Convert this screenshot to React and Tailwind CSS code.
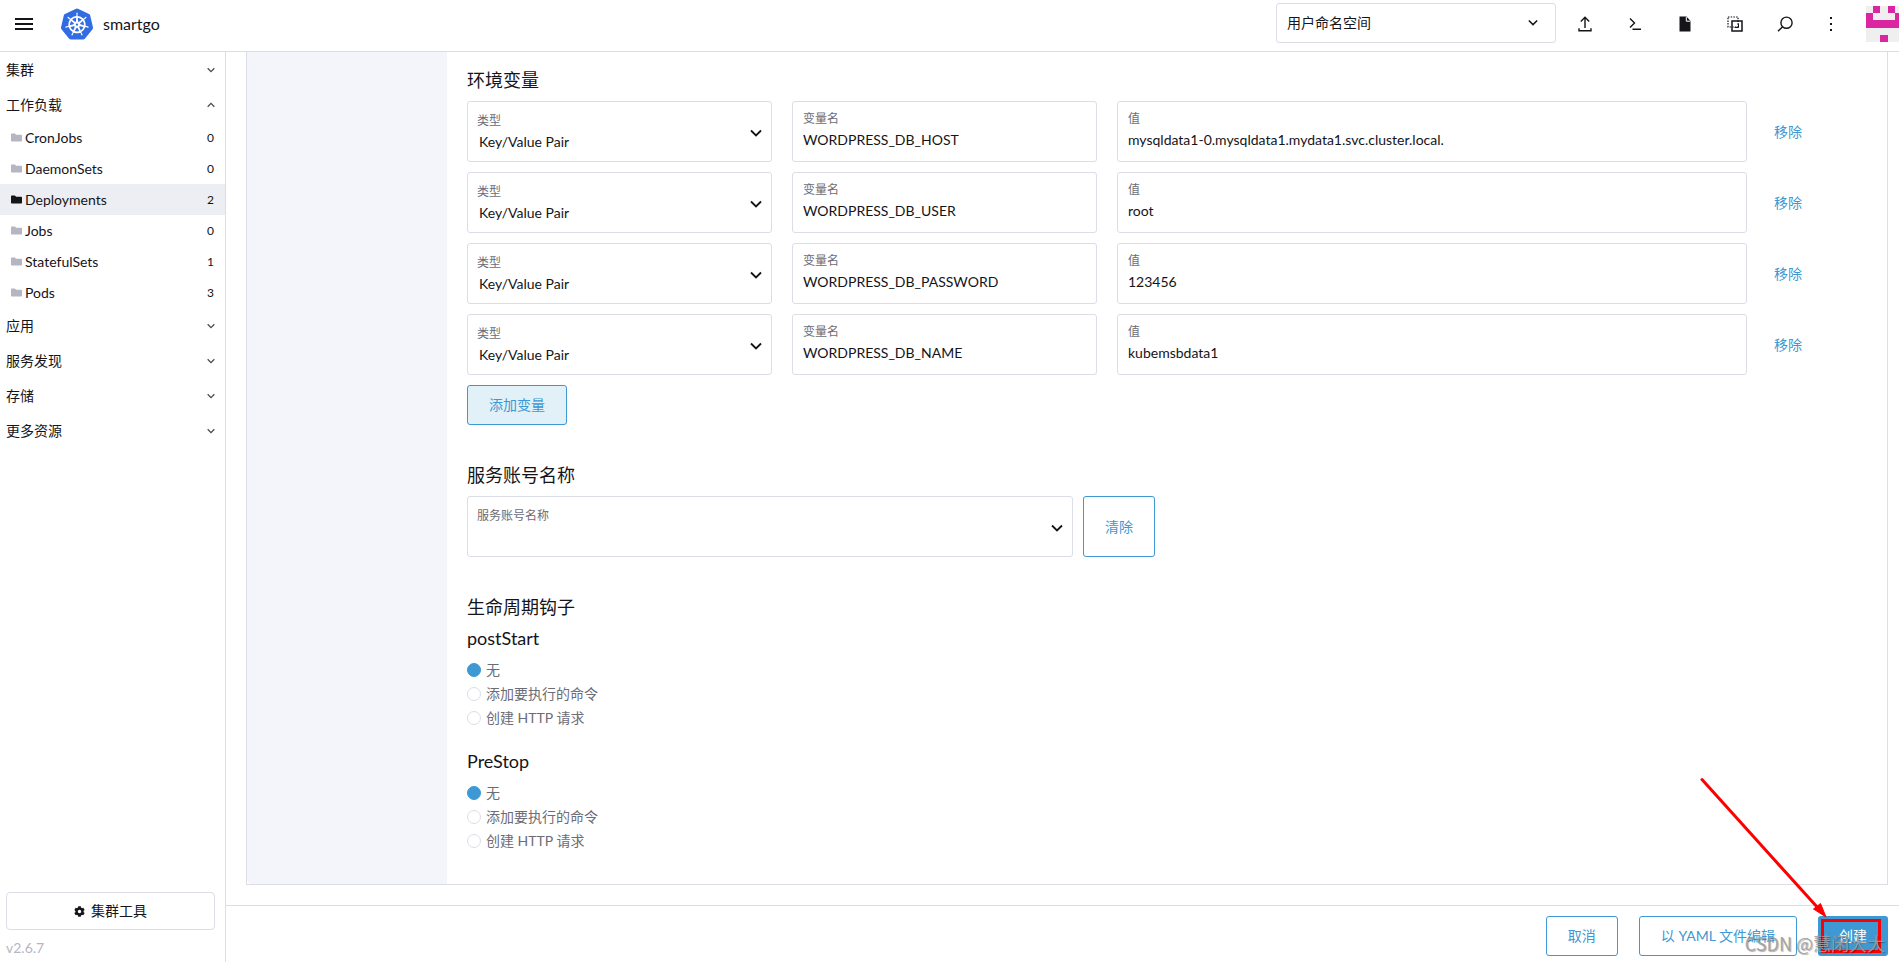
import { useState } from "react";
import { FaCog } from "react-icons/fa";
import { SiKubernetes } from "react-icons/si";

const workloads = [
  { name: "CronJobs", count: 0 },
  { name: "DaemonSets", count: 0 },
  { name: "Deployments", count: 2 },
  { name: "Jobs", count: 0 },
  { name: "StatefulSets", count: 1 },
  { name: "Pods", count: 3 },
];

const groupsBelow = ["应用", "服务发现", "存储", "更多资源"];

const initialVars = [
  { id: 1, name: "WORDPRESS_DB_HOST", value: "mysqldata1-0.mysqldata1.mydata1.svc.cluster.local." },
  { id: 2, name: "WORDPRESS_DB_USER", value: "root" },
  { id: 3, name: "WORDPRESS_DB_PASSWORD", value: "123456" },
  { id: 4, name: "WORDPRESS_DB_NAME", value: "kubemsbdata1" },
];

const hookOptions = ["无", "添加要执行的命令", "创建 HTTP 请求"];

function Chevron({ className, up, strokeWidth = 1.5 }) {
  return (
    <svg viewBox="0 0 12 8" fill="none" stroke="currentColor" strokeWidth={strokeWidth} className={className} aria-hidden="true">
      <path d={up ? "M1 6.5 6 1.5l5 5" : "M1 1.5l5 5 5-5"} />
    </svg>
  );
}

function FolderIcon({ className }) {
  return (
    <svg viewBox="0 0 11 9" fill="currentColor" className={className} aria-hidden="true">
      <path d="M0 1.2Q0 .4.8.4h3l1.400 1.400h5q.8 0 .8.8v5.200q0 .8-.8.8H.8Q0 8.600 0 7.800z" />
    </svg>
  );
}

function Avatar() {
  return (
    <div className="ml-[14px] h-9 w-[33px] shrink-0 overflow-hidden">
      <svg viewBox="0 0 5 5" className="h-9 w-9 max-w-none" shapeRendering="crispEdges" aria-hidden="true">
        <rect width="5" height="5" fill="#efefef" />
        <path d="M1 0h1v1H1zM3 0h1v1H3zM0 1h1v1h3V1h1v2H0zM2 4h1v1H2z" fill="#dc26a1" />
      </svg>
    </div>
  );
}

function HeaderButton({ label, children }) {
  return (
    <button aria-label={label} className="flex h-10 w-[50px] shrink-0 items-center justify-center">
      <svg viewBox="0 0 16 16" fill="none" stroke="currentColor" strokeWidth="1.4" className="h-4 w-4" aria-hidden="true">
        {children}
      </svg>
    </button>
  );
}

function Header() {
  return (
    <header className="flex h-[52px] shrink-0 items-center overflow-hidden border-b border-[#dcdee7] pb-[3px]">
      <button aria-label="菜单" className="ml-[15px] flex w-[18px] shrink-0 flex-col gap-[3px]">
        <span className="h-0.5 bg-[#141419]" />
        <span className="h-0.5 bg-[#141419]" />
        <span className="h-0.5 bg-[#141419]" />
      </button>
      <SiKubernetes className="ml-7 h-8 w-8 shrink-0 text-[#326ce5]" />
      <span className="ml-[10px] text-base">smartgo</span>

      <div className="relative mr-1 mb-[2px] ml-auto w-[280px]">
        <select aria-label="命名空间" className="h-10 w-full appearance-none rounded-[3px] border border-[#dcdee7] bg-white px-[10px] text-sm">
          <option>用户命名空间</option>
        </select>
        <Chevron className="pointer-events-none absolute top-4 right-[18px] h-[7px] w-[10px]" strokeWidth={1.8} />
      </div>
      <HeaderButton label="导入 YAML">
        <path d="M8 12V1.500M3.800 5.500 8 1.300l4.200 4.200M2 12.300v2.400h12v-2.400" />
      </HeaderButton>
      <HeaderButton label="Kubectl Shell">
        <path d="M3 2.500 7.500 7 3 11.500M5.500 13.300H14" />
      </HeaderButton>
      <HeaderButton label="下载 KubeConfig">
        <path d="M2.500.5h7L13.500 5v10.500h-11z" fill="currentColor" stroke="none" />
        <path d="M9.300 1v4.200h4" stroke="#fff" strokeWidth="1" />
      </HeaderButton>
      <HeaderButton label="复制 KubeConfig">
        <path d="M1 1h10v10H1z" strokeDasharray="1.500 1.200" strokeWidth="1.200" />
        <path d="M5 5h10v10H5z" strokeWidth="1.500" />
        <path d="M7.500 11.500h4v-4" strokeWidth="1" />
      </HeaderButton>
      <HeaderButton label="搜索">
        <circle cx="9.500" cy="6.700" r="5.600" />
        <path d="M5.600 10.700 1 15.300" />
      </HeaderButton>
      <button aria-label="更多" className="flex h-10 w-[42px] shrink-0 flex-col items-center justify-center gap-1">
        <span className="h-0.5 w-0.5 bg-[#141419]" />
        <span className="h-0.5 w-0.5 bg-[#141419]" />
        <span className="h-0.5 w-0.5 bg-[#141419]" />
      </button>
      <Avatar />
    </header>
  );
}

function NavGroup({ name, open }) {
  return (
    <button className="flex h-[35px] w-full items-center justify-between pr-[10px] pl-[6px] text-sm">
      {name}
      <Chevron up={open} className="h-[6px] w-[8px] text-[#4c4c56]" strokeWidth={2} />
    </button>
  );
}

function Sidebar() {
  return (
    <nav className="flex w-[226px] shrink-0 flex-col border-r border-[#dcdee7]">
      <NavGroup name="集群" />
      <NavGroup name="工作负载" open />
      <ul>
        {workloads.map((item) => {
          const active = item.name === "Deployments";
          return (
            <li key={item.name}>
              <a href="#" className={`flex h-[31px] items-center pr-[11px] pl-[11px] text-sm ${active ? "bg-[#edeef3]" : ""}`}>
                <FolderIcon className={`mr-[3px] h-[9px] w-[11px] ${active ? "text-[#141419]" : "text-[#b6b6c2]"}`} />
                {item.name}
                <span className="ml-auto text-xs">{item.count}</span>
              </a>
            </li>
          );
        })}
      </ul>
      {groupsBelow.map((name) => (
        <NavGroup key={name} name={name} />
      ))}

      <div className="mt-auto pr-[10px] pb-1 pl-[6px]">
        <button className="mb-2 flex h-[38px] w-full items-center justify-center gap-[6px] rounded-[4px] border border-[#dcdee7] text-sm">
          <FaCog className="h-[11px] w-[11px]" />
          集群工具
        </button>
        <p className="text-sm text-[#b6b6c2]">v2.6.7</p>
      </div>
    </nav>
  );
}

function SelectField({ id, label, options }) {
  return (
    <div className="relative h-[61px] rounded-[3px] border border-[#dcdee7]">
      <label htmlFor={id} className="absolute top-[11px] left-[9px] text-xs text-[#6c6c76]">
        {label}
      </label>
      <select id={id} className="h-full w-full appearance-none bg-transparent pt-[22px] pr-8 pb-[2px] pl-[11px] text-sm">
        {options.map((option) => (
          <option key={option}>{option}</option>
        ))}
      </select>
      <Chevron className="pointer-events-none absolute top-[27px] right-[9px] h-[8px] w-[12px]" strokeWidth={1.8} />
    </div>
  );
}

function TextField({ id, label, value }) {
  return (
    <div className="flex h-[61px] flex-col rounded-[3px] border border-[#dcdee7] px-[10px] pt-[9px]">
      <label htmlFor={id} className="text-xs text-[#6c6c76]">
        {label}
      </label>
      <input id={id} type="text" defaultValue={value} className="mt-[3px] h-5 w-full text-sm outline-none" />
    </div>
  );
}

function Hook({ name, title }) {
  return (
    <fieldset>
      <legend className="mb-2 text-lg leading-6">{title}</legend>
      {hookOptions.map((option, i) => (
        <label key={option} className="flex h-6 items-center gap-[5px] text-sm text-[#6c6c76]">
          <input
            type="radio"
            name={name}
            defaultChecked={i === 0}
            className="h-[14px] w-[14px] appearance-none rounded-full border border-[#dcdee7] checked:border-[#3d98d3] checked:bg-[#3d98d3]"
          />
          {option}
        </label>
      ))}
    </fieldset>
  );
}

function Heading({ children }) {
  return <h3 className="mb-[9px] text-lg leading-6">{children}</h3>;
}

// red arrow and frame pointing at the create button
function Callout() {
  return (
    <svg viewBox="0 0 190 180" className="pointer-events-none absolute right-0 bottom-0 h-[180px] w-[190px] max-w-none" aria-hidden="true">
      <path d="M4 3.500 120 132" stroke="#fe0000" strokeWidth="3" strokeLinecap="round" />
      <path d="M128 141 115.500 133l7-5.500z" fill="#fe0000" stroke="#fe0000" />
      <rect x="124.500" y="144.500" width="57" height="31" fill="none" stroke="#fe0000" strokeWidth="3" />
    </svg>
  );
}

function Footer() {
  return (
    <footer className="relative flex h-[57px] shrink-0 items-center justify-end gap-[21px] border-t border-[#dcdee7] pt-[3px] pr-[11px] text-sm">
      <button className="h-10 rounded-[3px] border border-[#3d98d3] px-[21px] text-[#3d98d3]">取消</button>
      <button className="h-10 rounded-[3px] border border-[#3d98d3] px-[21px] text-[#3d98d3]">以 YAML 文件编辑</button>
      <div className="relative">
        <button className="h-10 rounded-[3px] bg-[#3d98d3] px-[21px] text-white">创建</button>
        <Callout />
      </div>
      <span className="pointer-events-none absolute right-[14px] bottom-[5px] font-['Noto_Sans_CJK_SC',sans-serif] text-lg text-[#a0a0a0]/90 [text-shadow:1px_1px_1px_#00000050]">
        CSDN @慧闲大大
      </span>
    </footer>
  );
}

export default function App() {
  const [vars, setVars] = useState(initialVars);

  const addVar = () => setVars([...vars, { id: Date.now(), name: "", value: "" }]);
  const removeVar = (id) => setVars(vars.filter((v) => v.id !== id));

  return (
    <div className="flex h-screen flex-col overflow-hidden bg-white font-['Lato','Noto_Sans_CJK_SC',sans-serif] text-[#141419]">
      <Header />
      <div className="flex min-h-0 flex-1">
        <Sidebar />
        <div className="flex min-w-0 flex-1 flex-col">
          <main className="mr-[11px] mb-5 ml-5 flex min-h-0 flex-1 border-x border-b border-[#dcdee7]">
            <div className="w-[200px] shrink-0 rounded-bl-[5px] bg-[#f4f5fa]" />
            <div className="min-w-0 flex-1 px-5 pt-4">
              <Heading>环境变量</Heading>
              <div className="flex flex-col gap-[10px]">
                {vars.map((v) => (
                  <div key={v.id} className="grid grid-cols-[305fr_305fr_630fr_100fr] items-center gap-x-5">
                    <SelectField id={`type-${v.id}`} label="类型" options={["Key/Value Pair"]} />
                    <TextField id={`name-${v.id}`} label="变量名" value={v.name} />
                    <TextField id={`value-${v.id}`} label="值" value={v.value} />
                    <button onClick={() => removeVar(v.id)} className="justify-self-start px-[7px] text-sm text-[#3d98d3]">
                      移除
                    </button>
                  </div>
                ))}
              </div>
              <button onClick={addVar} className="mt-[10px] h-10 rounded-[3px] border border-[#3d98d3] bg-[#e2f0f8] px-[21px] text-sm text-[#3d98d3]">
                添加变量
              </button>

              <section className="mt-[38px]">
                <Heading>服务账号名称</Heading>
                <div className="flex max-w-[688px] gap-[10px]">
                  <div className="flex-1">
                    <SelectField id="service-account" label="服务账号名称" options={[""]} />
                  </div>
                  <button className="rounded-[3px] border border-[#3d98d3] px-[21px] text-sm text-[#3d98d3]">清除</button>
                </div>
              </section>

              <section className="mt-[38px]">
                <h3 className="mb-[7px] text-lg leading-6">生命周期钩子</h3>
                <div className="flex flex-col gap-[19px]">
                  <Hook name="post-start" title="postStart" />
                  <Hook name="pre-stop" title="PreStop" />
                </div>
              </section>
            </div>
          </main>
          <Footer />
        </div>
      </div>
    </div>
  );
}
